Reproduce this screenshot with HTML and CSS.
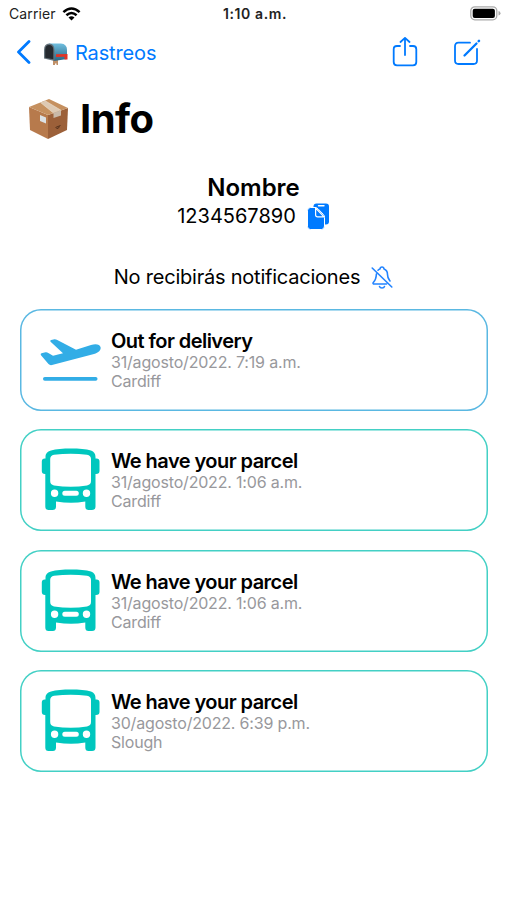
FILE: index.html
```html
<!DOCTYPE html>
<html lang="es">
<head>
  <meta charset="UTF-8">
  <meta name="viewport" content="width=device-width, initial-scale=1.0">
  <title>Info – Rastreos</title>
  <link rel="stylesheet" href="styles.css">
</head>
<body>
  <!-- Shared bus icon -->
  <svg class="defs" width="0" height="0">
    <symbol id="bus" viewBox="0 0 60 64">
      <path fill-rule="evenodd" d="M10 2.500C15 1 22 .6 30 .6S45 1 50 2.500C53 3.500 54.500 6 54.500 9V10.500H55.500Q58.500 10.500 58.500 13.500V23Q58.500 26 55 26H54.500V58.500Q54.500 62 51 62H47.500Q44.300 62 44.300 58.500V53.500Q37 54.800 30 54.800T15 53.500V58.500Q15 62 11.800 62H7.500Q4.300 62 4.300 58.500V26H4Q.8 26 .8 23V13.500Q.8 10.500 3.800 10.500H4.500V9C4.500 6 6 3.500 10 2.500ZM13 6.800Q9.200 7.500 9.200 11V33Q9.200 36.700 13 37.400Q30 40 46 37.400Q50 36.700 50 33V11Q50 7.500 46 6.800Q30 4.600 13 6.800ZM13.600 41.500A3.700 3.700 0 1 0 13.600 48.900A3.700 3.700 0 1 0 13.600 41.500ZM45.500 41.500A3.700 3.700 0 1 0 45.500 48.900A3.700 3.700 0 1 0 45.500 41.500ZM23.800 42.700A2.500 2.500 0 0 0 23.800 47.700H35.300A2.500 2.500 0 0 0 35.300 42.700Z"/>
    </symbol>
  </svg>

  <div class="status-bar">
    <div class="carrier">
      <span>Carrier</span>
      <svg width="19" height="14" viewBox="0 0 18 14" fill="none" stroke="#000" stroke-width="2.500">
        <path d="M.9 5.200Q9-2.300 17.100 5.200M3.900 8.300Q9 3.700 14.100 8.300"/>
        <path d="M6 10.400Q9 7.900 12 10.400L9 13.400Z" fill="#000" stroke="none"/>
      </svg>
    </div>
    <div class="time">1:10 a.m.</div>
    <svg class="battery" width="31" height="15" viewBox="0 0 31 15">
      <rect x=".8" y=".8" width="26" height="13" rx="4" fill="#fff" stroke="#aaa" stroke-width="1.300"/>
      <rect x="2.700" y="2.700" width="22.200" height="9.200" rx="2" fill="#000"/>
      <path d="M28.500 5Q30.500 5.500 30.500 7.300T28.500 9.600Z" fill="#aaa"/>
    </svg>
  </div>

  <nav class="nav">
    <a class="back" href="#">
      <svg width="15" height="25" viewBox="0 0 15 25" fill="none" stroke="#007aff" stroke-width="2.800" stroke-linecap="round" stroke-linejoin="round"><path d="M13 1.500L2.500 12L13 22.500"/></svg>
      <svg class="mailbox" width="26" height="24" viewBox="0 0 26 24">
        <defs>
          <linearGradient id="mail" x1="0" y1="0" x2="0" y2="1">
            <stop offset="0" stop-color="#70bfe0"/>
            <stop offset="1" stop-color="#286482"/>
          </linearGradient>
        </defs>
        <path d="M10 16H15V23H13.500V21.500H12V23H10Z" fill="#c09068"/>
        <path d="M6 1.500H18Q24 2 24 8V17L11 19Z" fill="url(#mail)"/>
        <path d="M1 16.500V8Q1 1.500 6.200 1.500T11.500 8V19Z" fill="#64727b"/>
        <path d="M2.200 15.700V8Q2.200 3 6.200 3T10.300 8V17.300Z" fill="#252a30"/>
        <path d="M13 12.200L24.500 12V17.500H21.500V14.700L13 15Z" fill="#e23325"/>
      </svg>
      <span>Rastreos</span>
    </a>
    <div class="actions">
      <svg width="26" height="31" viewBox="0 0 26 31" fill="none" stroke="#007aff" stroke-width="1.800" stroke-linecap="round" stroke-linejoin="round">
        <path d="M8 9H5Q1.700 9 1.700 12.300V25Q1.700 28.300 5 28.300H21Q24.300 28.300 24.300 25V12.300Q24.300 9 21 9H18M13 18V1.200M8.500 5L13 .9L17.500 5"/>
      </svg>
      <svg width="28" height="28" viewBox="0 0 28 28" fill="none" stroke="#007aff" stroke-width="1.800" stroke-linecap="round" stroke-linejoin="round">
        <path d="M17 3.700H5.500Q2 3.700 2 7.200V21.500Q2 25 5.500 25H20.500Q24 25 24 21.500V10"/>
        <path d="M11.500 16.500L23.500 4.500" stroke-width="2.300"/>
        <path d="M25.700 2.200L26 1.900" stroke-width="2.500"/>
      </svg>
    </div>
  </nav>

  <header class="title">
    <svg width="42" height="42" viewBox="0 0 42 42">
      <path d="M1 9L20 17V41L2 32Z" fill="#b77a4c"/>
      <path d="M20 17L40 10L39 32L20 41Z" fill="#9c6039"/>
      <path d="M1 9L21 1L40 10L20 17Z" fill="#c5905f"/>
      <path d="M12.500 4.500L17 2.700L33 12.300L25.500 15Z" fill="#ddc9b3"/>
      <path d="M25.500 15L33 12.300V17.500L25.500 20Z" fill="#c9b9a8"/>
      <path d="M12.500 4.500L25.500 15M17 2.700L33 12.300" fill="none" stroke="#eee0cf" stroke-width=".6"/>
      <path d="M12 17L18 19.500V25.500L12 23Z" fill="#dce1e5"/>
      <path d="M27.500 29.500L32.500 27.500M28.500 30.500Q30.500 31 31.500 28.500" fill="none" stroke="#54311c" stroke-width="1"/>
    </svg>
    <h1>Info</h1>
  </header>

  <section class="parcel">
    <h2>Nombre</h2>
    <div class="code">
      <span>1234567890</span>
      <svg width="23" height="27" viewBox="0 0 23 27">
        <rect x="6.500" y=".5" width="15.500" height="21" rx="3" fill="#007aff"/>
        <path d="M11.500 2.700H17" stroke="#fff" stroke-width="1.400" stroke-linecap="round"/>
        <path d="M3.500 4.500H8Q9.800 4.500 11 5.800L16.500 11.500Q17.500 12.500 17.500 14.500V23Q17.500 26.500 14.500 26.500H3.500Q.5 26.500 .5 23.500V7.500Q.5 4.500 3.500 4.500Z" fill="#007aff" stroke="#fff" stroke-width="1"/>
        <path d="M8.600 5V11.700Q8.600 13.800 10.700 13.800H17Z" fill="#007aff" stroke="#fff" stroke-width="1.200" stroke-linejoin="round"/>
      </svg>
    </div>
  </section>

  <div class="notice">
    <span>No recibirás notificaciones</span>
    <svg width="22" height="23" viewBox="0 0 22 23" fill="none" stroke="#2384ff" stroke-width="1.600" stroke-linecap="round" stroke-linejoin="round">
      <path d="M7 4.200Q8 3.200 9 3Q9.200 1 11 1T13 3Q16.500 4.200 16.500 8.500C16.500 12 17.500 13 19 15M15.500 18H2.500Q1.500 17.500 2.500 16.300C5 13.700 5.200 12 5.400 8M8.500 20.500Q9 22 11 22T13.500 20.500M1.200 2L20.800 21"/>
    </svg>
  </div>

  <main class="events">
    <article class="card delivery">
      <svg width="62" height="64" viewBox="0 0 62 64">
        <path d="M1.500 25.300L5.500 24.300Q7 24 8.300 25L13 27.800L23 25.200L10.600 13.700Q9.400 12.500 11.200 11.900L14.500 11.200Q15.500 11 16.800 11.700L36 21.800L51 17C56 15.400 60 16.400 60.600 19.200C61.200 22 58.500 24.800 54 26L12 37Q9.900 37.500 8.500 36L1 27.300Q0 25.800 1.500 25.300Z"/>
        <rect x="3" y="49" width="54.500" height="3.700" rx="1.800"/>
      </svg>
      <div class="details">
        <h3>Out for delivery</h3>
        <p>31/agosto/2022. 7:19 a.m.</p>
        <p>Cardiff</p>
      </div>
    </article>
    <article class="card">
      <svg width="60" height="64"><use href="#bus"/></svg>
      <div class="details">
        <h3>We have your parcel</h3>
        <p>31/agosto/2022. 1:06 a.m.</p>
        <p>Cardiff</p>
      </div>
    </article>
    <article class="card">
      <svg width="60" height="64"><use href="#bus"/></svg>
      <div class="details">
        <h3>We have your parcel</h3>
        <p>31/agosto/2022. 1:06 a.m.</p>
        <p>Cardiff</p>
      </div>
    </article>
    <article class="card">
      <svg width="60" height="64"><use href="#bus"/></svg>
      <div class="details">
        <h3>We have your parcel</h3>
        <p>30/agosto/2022. 6:39 p.m.</p>
        <p>Slough</p>
      </div>
    </article>
  </main>
</body>
</html>
```

FILE: styles.css
```css
* { box-sizing: border-box; }

body {
  margin: 0;
  font-family: Inter, sans-serif;
  background: #fff;
  color: #000;
  min-height: 100vh;
}

h1, h2, h3, p { margin: 0; }

svg { display: block; flex-shrink: 0; }

.defs { position: absolute; }

.status-bar {
  display: grid;
  grid-template-columns: 1fr auto 1fr;
  align-items: center;
  height: 27px;
  padding: 0 6px 0 9px;
  font-size: 14px;
  color: #222;
}

.carrier {
  display: flex;
  align-items: center;
  gap: 6px;
  letter-spacing: 0.1px;
}

.time {
  font-weight: 600;
  letter-spacing: 0.6px;
}

.battery { justify-self: end; }

.nav {
  display: flex;
  align-items: center;
  justify-content: space-between;
  height: 51px;
  padding: 0 26px 0 16px;
}

.back {
  display: flex;
  align-items: center;
  color: #007aff;
  font-size: 20px;
  letter-spacing: -0.15px;
  text-decoration: none;
}

.mailbox { margin: 3px 6px 0 12px; }

.actions {
  display: flex;
  align-items: center;
  gap: 35px;
}

.title {
  display: flex;
  align-items: center;
  gap: 10px;
  height: 81px;
  padding-left: 28px;
}

h1 {
  font-size: 40px;
  font-weight: 700;
  letter-spacing: -0.6px;
}

.parcel {
  padding-top: 14px;
  text-align: center;
}

h2 {
  font-size: 24px;
  line-height: 29px;
  font-weight: 600;
}

.code {
  display: flex;
  justify-content: center;
  align-items: center;
  gap: 11px;
  height: 28px;
  font-size: 20px;
}

.notice {
  display: flex;
  justify-content: center;
  align-items: center;
  gap: 11px;
  height: 30px;
  margin-top: 32px;
  font-size: 20px;
  letter-spacing: -0.22px;
}

.events {
  display: flex;
  flex-direction: column;
  gap: 18.5px;
  padding: 16.5px 19px 0 20px;
}

.card {
  display: flex;
  align-items: center;
  gap: 10px;
  height: 102px;
  padding-left: 21px;
  border-radius: 21px;
  box-shadow: inset 0 0 0 1.5px #43d0c5;
  fill: #00c7be;
}

.card.delivery {
  gap: 9px;
  padding-left: 20px;
  box-shadow: inset 0 0 0 1.5px #5ab8e2;
  fill: #32ade6;
}

h3 {
  font-size: 20px;
  line-height: 24px;
  font-weight: 600;
  letter-spacing: -0.55px;
}

.details p {
  font-size: 16px;
  line-height: 19px;
  letter-spacing: -0.18px;
  color: #98989c;
}
```
